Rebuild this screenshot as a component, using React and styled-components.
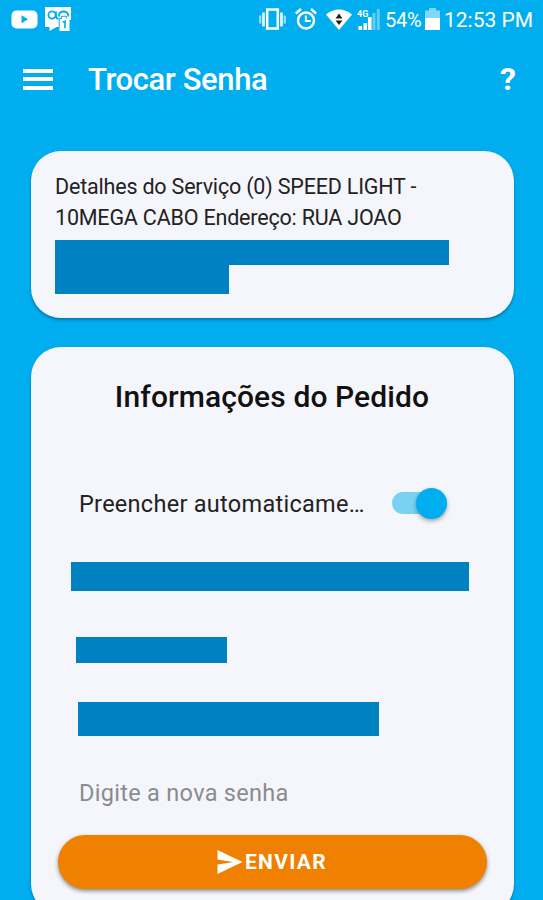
import React, { useState } from 'react';
import styled, { createGlobalStyle } from 'styled-components';

const GlobalStyle = createGlobalStyle`
  * {
    box-sizing: border-box;
  }
  body {
    margin: 0;
    background: #00aeef;
    font-family: Roboto, 'Liberation Sans', sans-serif;
  }
`;

const Screen = styled.div`
  width: 100%;
  height: 900px;
  overflow: hidden;
  background: #00aeef;
`;

const StatusBar = styled.div`
  display: flex;
  align-items: center;
  justify-content: space-between;
  height: 38px;
  padding: 0 9px 0 11px;
  color: #fff;
`;

const StatusGroup = styled.div`
  display: flex;
  align-items: center;
`;

const StatusIcon = styled.svg`
  display: block;
  flex-shrink: 0;
  margin-right: ${(props) => props.$gap || 0}px;
`;

const StatusText = styled.span`
  font-size: ${(props) => props.$size}px;
  line-height: 38px;
  width: ${(props) => props.$width}px;
  letter-spacing: ${(props) => props.$spacing || 0}px;
  white-space: nowrap;
  padding-top: 1px;
`;

const AppBar = styled.header`
  display: flex;
  align-items: center;
  height: 82px;
  padding: 0 27px 0 23px;
  color: #fff;
`;

const MenuBtn = styled.button`
  display: flex;
  flex-direction: column;
  justify-content: space-between;
  width: 30px;
  height: 21px;
  padding: 0;
  border: none;
  background: none;
  cursor: pointer;
`;

const MenuLine = styled.span`
  width: 100%;
  height: 4px;
  background: #fff;
`;

const PageTitle = styled.h1`
  flex: 1;
  margin: 2px 0 0 35px;
  font-size: 31px;
  font-weight: 500;
  line-height: 40px;
  letter-spacing: -0.4px;
`;

const HelpBtn = styled.button`
  padding: 0;
  border: none;
  background: none;
  color: #fff;
  font-family: inherit;
  font-size: 32px;
  font-weight: 700;
  line-height: 40px;
  cursor: pointer;
`;

const Content = styled.main`
  display: flex;
  flex-direction: column;
  gap: 29px;
  padding: 31px 29.5px 0 30.5px;
`;

const Card = styled.section`
  height: ${(props) => props.$height}px;
  padding: ${(props) => props.$padding};
  background: #f5f6fb;
  border-radius: 30px;
  box-shadow: 0 2px 3px rgba(0, 40, 70, 0.4);
`;

const Details = styled.p`
  margin: 0 0 7px;
  font-size: 21.5px;
  line-height: 31px;
  letter-spacing: -0.19px;
  color: #222;
  white-space: nowrap;
`;

const Redacted = styled.div`
  width: ${(props) => props.$width}px;
  height: ${(props) => props.$height}px;
  margin: ${(props) => props.$margin || 0};
  background: #0081c1;
`;

const CardTitle = styled.h2`
  margin: 0;
  font-size: 30px;
  font-weight: 500;
  line-height: 40px;
  letter-spacing: 0.1px;
  text-align: center;
  color: #111;
`;

const SwitchRow = styled.label`
  display: flex;
  align-items: center;
  height: 40px;
  margin: 66px 0 38px;
  padding-left: 48.5px;
  cursor: pointer;
`;

const SwitchLabel = styled.span`
  width: 313px;
  padding-top: 2px;
  font-size: 23.500px;
  line-height: 40px;
  letter-spacing: 0.28px;
  color: #222;
  white-space: nowrap;
`;

const Track = styled.span`
  display: flex;
  align-items: center;
  justify-content: ${(props) => (props.$on ? 'flex-end' : 'flex-start')};
  width: 55px;
  height: 22px;
  border-radius: 11px;
  background: ${(props) => (props.$on ? '#7ad2f2' : '#bbb')};
`;

const Thumb = styled.span`
  width: 31px;
  height: 31px;
  border-radius: 50%;
  background: ${(props) => (props.$on ? '#00aeef' : '#fff')};
  box-shadow: 0 2px 4px rgba(0, 0, 0, 0.35);
`;

const PasswordInput = styled.input`
  display: block;
  width: 380px;
  height: 40px;
  margin: 37px 0 0 48.5px;
  padding: 0;
  border: none;
  outline: none;
  background: none;
  font-family: inherit;
  font-size: 23.500px;
  letter-spacing: 0.3px;

  &::placeholder {
    color: #8a8b8e;
    opacity: 1;
  }
`;

const SendBtn = styled.button`
  display: flex;
  align-items: center;
  justify-content: center;
  gap: 2px;
  width: 429px;
  height: 54px;
  margin: 22px 0 0 27px;
  padding: 0;
  border: none;
  border-radius: 27px;
  background: #f08000;
  box-shadow: 0 2px 4px rgba(0, 0, 0, 0.45);
  color: #fff;
  font-family: inherit;
  font-size: 21px;
  font-weight: 700;
  letter-spacing: 1.3px;
  cursor: pointer;
`;

const App = () => {
  const [autoFill, setAutoFill] = useState(true);
  const [password, setPassword] = useState('');

  return (
    <Screen>
      <GlobalStyle />
      <StatusBar>
        <StatusGroup>
          <StatusIcon width="27" height="19" viewBox="0 0 27 19" $gap={7}>
            <rect x="0.5" y="0.5" width="26" height="18" rx="5" fill="#fff" />
            <path d="M10.5 5.3v8l6.5-4z" fill="#00aeef" />
          </StatusIcon>
          <StatusIcon width="26" height="25" viewBox="0 0 26 25">
            <path d="M0 0h26v13h-1.500v11h-10v-4h-3l-7 4v-4H0z" fill="#fff" />
            <g fill="none" stroke="#00aeef">
              <circle cx="7" cy="8" r="3.600" strokeWidth="1.800" />
              <path d="M11 4.500v5q0 2.200 2.500 2.200" strokeWidth="1.800" />
              <path d="M13.800 9.500q0-5 4.700-5t5 5" strokeWidth="1.800" />
              <path d="M14.200 20V11.500h2.300V9.300h5v2" strokeWidth="1" />
              <path d="M17.700 15.200l2.300-1v7" strokeWidth="1.700" />
            </g>
          </StatusIcon>
        </StatusGroup>
        <StatusGroup>
          <StatusIcon width="27" height="22" viewBox="0 0 27 22" $gap={9}>
            <path d="M8.200 1.500h10.600v19H8.200z" fill="none" stroke="#fff" strokeWidth="2.500" />
            <path d="M4.500 4.500v14M22.500 4.500v14" stroke="#fff" strokeWidth="2.800" opacity="0.85" />
            <path d="M1.200 7.500v8M25.800 7.500v8" stroke="#fff" strokeWidth="2.200" opacity="0.6" />
          </StatusIcon>
          <StatusIcon width="22" height="22" viewBox="0 0 22 22" $gap={9}>
            <g fill="none" stroke="#fff">
              <circle cx="11" cy="12.500" r="8" strokeWidth="2.500" />
              <path d="M10.800 7.500v5.500h5" strokeWidth="1.900" />
              <path d="M0.800 5.500L6 1M21.200 5.500L16 1" strokeWidth="2.500" />
            </g>
          </StatusIcon>
          <StatusIcon width="26" height="21" viewBox="0 0 26 21" $gap={5}>
            <path d="M0 5.500Q13-4.500 26 5.500L13 21z" fill="#fff" />
            <path d="M9.500 9.500L13 4.500l3.500 5zM9.500 11.500h7L13 16z" fill="#222" />
          </StatusIcon>
          <StatusIcon width="23" height="23" viewBox="0 0 23 23" $gap={5}>
            <text x="0" y="8.500" fill="#fff" fontSize="9" fontWeight="700">
              4G
            </text>
            <path d="M1.500 18h3.600v4H1.500zM6.500 15h3.600v7H6.500zM11 9h3.600v13H11z" fill="#fff" />
            <path d="M15.500 5h2.900v17h-2.900zM19.800 1h2.900v21h-2.900z" fill="#fff" opacity="0.4" />
          </StatusIcon>
          <StatusText $size={20} $width={40} $spacing={-0.3}>
            54%
          </StatusText>
          <StatusIcon width="15" height="22" viewBox="0 0 15 22" $gap={4}>
            <path d="M0 2.500h4V0h7v2.500h4V10H0z" fill="#fff" opacity="0.5" />
            <path d="M0 10h15v12H0z" fill="#fff" />
          </StatusIcon>
          <StatusText $size={21} $width={90}>
            12:53 PM
          </StatusText>
        </StatusGroup>
      </StatusBar>
      <AppBar>
        <MenuBtn aria-label="Menu">
          <MenuLine />
          <MenuLine />
          <MenuLine />
        </MenuBtn>
        <PageTitle>Trocar Senha</PageTitle>
        <HelpBtn>?</HelpBtn>
      </AppBar>
      <Content>
        <Card $height={167} $padding="20px 24.5px 0">
          <Details>
            Detalhes do Serviço (0) SPEED LIGHT -
            <br />
            10MEGA CABO Endereço: RUA JOAO
          </Details>
          <Redacted $width={394} $height={25} />
          <Redacted $width={174} $height={29} />
        </Card>
        <Card $height={567} $padding="30px 0 0">
          <CardTitle>Informações do Pedido</CardTitle>
          <SwitchRow onClick={() => setAutoFill(!autoFill)}>
            <SwitchLabel>Preencher automaticame…</SwitchLabel>
            <Track $on={autoFill}>
              <Thumb $on={autoFill} />
            </Track>
          </SwitchRow>
          <Redacted $width={398} $height={29} $margin="39px 0 0 40.5px" />
          <Redacted $width={151} $height={26} $margin="46px 0 0 45px" />
          <Redacted $width={301} $height={34} $margin="39px 0 0 47px" />
          <PasswordInput
            placeholder="Digite a nova senha"
            value={password}
            onChange={(e) => {
              setPassword(e.target.value);
            }}
          />
          <SendBtn>
            <svg width="26" height="24" viewBox="0 0 25 24">
              <path d="M0 0l25 12L0 24v-9.500l16-2.500L0 9.500z" fill="#fff" />
            </svg>
            <span>ENVIAR</span>
          </SendBtn>
        </Card>
      </Content>
    </Screen>
  );
};

export default App;
